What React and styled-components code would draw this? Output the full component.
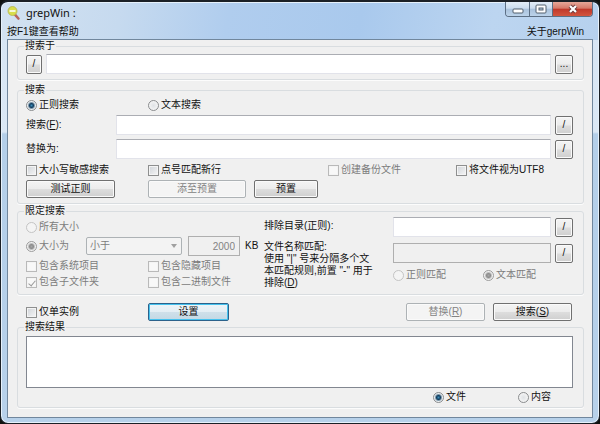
import React from 'react'
import styled, { createGlobalStyle, css } from 'styled-components'

const GlobalStyle = createGlobalStyle`
  * {
    box-sizing: border-box;
  }
  body {
    margin: 0;
    background: #10120f;
  }
  body, button, input, select, textarea {
    font-family: "Liberation Sans", "Noto Sans CJK SC", sans-serif;
    font-size: 10px;
    line-height: 12px;
    color: #111;
  }
`

const Window = styled.div`
  padding: 0 6px 5px;
  border: 1px solid #1b2026;
  border-top-width: 2px;
  border-radius: 8px;
  background:
    linear-gradient(100deg, #d3e2f1 0%, #c6daef 20%, #b0cdee 38%, #a9c9ed 60%, #bcd5f0 82%, #b6d1ee 100%) top / 100% 38px no-repeat,
    linear-gradient(#d5e4f3 0%, #dbe8f5 130px, #b4cfe9 132px, #b7d1ea 100%);
  box-shadow: inset 0 0 0 1px #e6f1fb;
`

const TitleBar = styled.header`
  display: flex;
  align-items: flex-start;
  height: 22px;
`

const Title = styled.h1`
  flex: 1;
  margin: 0;
  padding: 3px 0 0 6px;
  font-family: "Noto Sans", "Noto Sans CJK SC", sans-serif;
  font-size: 11px;
  font-weight: 400;
  line-height: 16px;
`

const AppIcon = styled.svg`
  width: 13px;
  height: 14px;
  margin-top: 4px;
`

const Captions = styled.div`
  display: flex;
  height: 15px;
  border: 1px solid #5c6f84;
  border-top: 0;
  border-radius: 0 0 4px 4px;
  overflow: hidden;
`

const Caption = styled.button`
  display: flex;
  align-items: center;
  justify-content: center;
  width: ${(p) => (p.$close ? '40px' : '23px')};
  padding: 0;
  border: 0;
  border-left: ${(p) => (p.$first ? '0' : '1px solid #5c6f84')};
  background: ${(p) =>
    p.$close
      ? 'linear-gradient(#e6a799 0%, #d67868 45%, #c0382a 50%, #d2553e 100%)'
      : 'linear-gradient(#e3edf7 0%, #cbdcee 45%, #a9c2dc 50%, #bcd3ea 100%)'};
`

const MenuBar = styled.nav`
  display: flex;
  justify-content: space-between;
  height: 15px;
  padding: 2px 9px 0 0;
`

const MenuLink = styled.a`
  color: #111;
  text-decoration: none;
`

const Client = styled.main`
  padding: 0 8px 9px 9px;
  border: 1px solid #71879d;
  background: #f0f0f0;
`

const Group = styled.fieldset`
  min-width: 0;
  margin: 0 0 ${(p) => p.$gap || 0}px;
  padding: 0 10px ${(p) => p.$bottom || 5}px 8px;
  border: 1px solid #d9dde0;
  border-radius: 3px;
  box-shadow: 0 1px 0 #fcfcfc;
`

const Legend = styled.legend`
  height: 12px;
  margin-left: -2px;
  padding: 0 1px;
`

const Field = styled.div`
  display: flex;
  align-items: center;
  gap: 4px;
  margin-top: ${(p) => p.$top || 0}px;
`

const FieldLabel = styled.label`
  width: 86px;
`

const TextBox = styled.input`
  flex: 1;
  min-width: 0;
  width: 100%;
  height: 20px;
  padding: 0 4px;
  border: 1px solid #e2e3ea;
  border-top-color: #abadb3;
  background: #fff;
  &:disabled {
    border-color: #afafaf;
    background: #f0f0f0;
    color: #838383;
  }
`

const Button = styled.button`
  height: 18px;
  width: ${(p) => p.$width}px;
  padding: 0;
  border: 1px solid #707070;
  border-radius: 2px;
  background: linear-gradient(#f4f4f4 0%, #ececec 48%, #dddddd 52%, #cfcfcf 100%);
  box-shadow: inset 0 0 0 1px #fafafa;
  text-align: center;
  ${(p) =>
    p.$focused &&
    css`
      border-color: #2c628b;
      background: linear-gradient(#eef4f8 0%, #e4eef4 48%, #cfe0ea 52%, #c3d8e4 100%);
      box-shadow: inset 0 0 0 1px #46c2ee;
    `}
  &:disabled {
    border-color: #adb2b5;
    background: #f4f4f4;
    color: #838383;
  }
`

const SmallButton = styled(Button)`
  width: ${(p) => p.$width || 18}px;
  height: 19px;
`

const Columns = styled.div`
  display: grid;
  grid-template-columns: 122px 180px 128px 1fr;
  align-items: center;
  min-height: ${(p) => p.$height || 16}px;
  margin-top: ${(p) => p.$top || 0}px;
`

const OptionLabel = styled.label`
  display: flex;
  align-items: center;
  gap: 2px;
  white-space: nowrap;
  color: ${(p) => (p.$off ? '#7c7c7c' : '#111')};
`

const CheckBox = styled.input.attrs({ type: 'checkbox' })`
  appearance: none;
  position: relative;
  width: 11px;
  height: 11px;
  margin: 0;
  border: 1px solid #8e8f8f;
  background: linear-gradient(135deg, #cfd3d8, #f6f6f6);
  box-shadow: inset 0 0 0 1px #f4f4f4;
  &:disabled {
    border-color: #b9b9b9;
    background: #f8f8f8;
  }
  &:checked::after {
    content: '';
    position: absolute;
    left: 3px;
    top: 1px;
    width: 3px;
    height: 6px;
    border: solid #9a9a9a;
    border-width: 0 1px 1px 0;
    transform: rotate(40deg);
  }
`

const Radio = styled.input.attrs({ type: 'radio' })`
  appearance: none;
  width: 11px;
  height: 11px;
  margin: 0;
  border: 1px solid #8a8c8e;
  border-radius: 50%;
  background: radial-gradient(circle, #dfe2e5 0%, #f6f6f6 80%);
  &:checked {
    background: radial-gradient(circle, #3f8db8 0, #123e60 2px, #e9eef1 4px);
  }
  &:disabled {
    border-color: #c4c4c4;
    background: #f4f4f4;
  }
  &:checked:disabled {
    border-color: #9c9c9c;
    background: radial-gradient(circle, #a5a5a5 0, #8d8d8d 2px, #f1f1f1 4px);
  }
`

const Limits = styled.div`
  display: grid;
  grid-template-columns: 238px 1fr;
`

const LimitColumn = styled.div`
  min-width: 0;
`

const SizeRow = styled.div`
  display: flex;
  align-items: center;
  height: 20px;
`

const SizeOption = styled.div`
  width: 60px;
`

const SelectWrap = styled.div`
  position: relative;
  width: 96px;
  margin-right: 6px;
  &::after {
    content: '';
    position: absolute;
    right: 5px;
    top: 7px;
    border: 3px solid transparent;
    border-top: 4px solid #a0a0a0;
    border-bottom: 0;
  }
`

const Select = styled.select`
  appearance: none;
  display: block;
  width: 100%;
  height: 18px;
  padding: 0 3px;
  border: 1px solid #adb2b5;
  border-radius: 2px;
  background: #f3f3f3;
  &:disabled {
    color: #7c7c7c;
    opacity: 1;
  }
`

const SizeBox = styled(TextBox)`
  flex: none;
  width: 52px;
  margin-right: 5px;
  text-align: right;
`

const Excludes = styled.div`
  display: grid;
  grid-template-columns: 129px 1fr;
  align-items: start;
`

const ExcludeLabel = styled.label`
  padding-top: ${(p) => p.$top || 0}px;
`

const Radios = styled.div`
  display: flex;
  justify-content: ${(p) => (p.$end ? 'flex-end' : 'flex-start')};
  gap: ${(p) => p.$gap}px;
  margin-top: ${(p) => p.$top}px;
  padding-right: ${(p) => (p.$end ? 22 : 0)}px;
`

const Actions = styled.div`
  display: grid;
  grid-template-columns: 114px 1fr auto auto;
  gap: 0 8px;
  padding: 0 12px 0 9px;
`

const Results = styled.textarea`
  display: block;
  width: 100%;
  height: 52px;
  margin-top: 3px;
  border: 1px solid #828790;
  background: #fff;
  resize: none;
`

const Check = ({ children, ...rest }) => (
  <OptionLabel $off={rest.disabled}>
    <CheckBox {...rest} />
    {children}
  </OptionLabel>
)

const Choice = ({ children, ...rest }) => (
  <OptionLabel $off={rest.disabled}>
    <Radio {...rest} />
    {children}
  </OptionLabel>
)

const App = () => {
  return (
    <>
      <GlobalStyle />
      <Window>
        <TitleBar>
          <AppIcon viewBox="0 0 13 14">
            <path d="M8 8.600l3.400 3.900" stroke="#b9655f" strokeWidth="2.600" strokeLinecap="round" />
            <circle cx="5.500" cy="5" r="4.500" fill="#d9dd4c" stroke="#b3b54e" strokeWidth="0.800" />
            <path d="M2.500 5h6" stroke="#fafbe6" strokeWidth="1.800" />
          </AppIcon>
          <Title>grepWin :</Title>
          <Captions>
            <Caption $first aria-label="最小化">
              <svg width="12" height="11" viewBox="0 0 12 11">
                <rect x="1" y="5" width="10" height="4" rx="1" fill="#fff" stroke="#53606e" />
              </svg>
            </Caption>
            <Caption aria-label="最大化">
              <svg width="12" height="10" viewBox="0 0 12 10">
                <rect x="1" y="1" width="10" height="8" rx="1" fill="#fff" stroke="#53606e" />
                <rect x="4" y="4" width="4" height="2" fill="#b9cde1" stroke="#53606e" />
              </svg>
            </Caption>
            <Caption $close aria-label="关闭">
              <svg width="12" height="10" viewBox="0 0 12 10">
                <path d="M3 2l6 6M9 2l-6 6" stroke="#6d3a3a" strokeWidth="4" />
                <path d="M3 2l6 6M9 2l-6 6" stroke="#fff" strokeWidth="2.200" />
              </svg>
            </Caption>
          </Captions>
        </TitleBar>
        <MenuBar>
          <MenuLink href="#help">按F1键查看帮助</MenuLink>
          <MenuLink href="#about">关于gerpWin</MenuLink>
        </MenuBar>

        <Client>
          <Group $gap={4}>
            <Legend>搜索于</Legend>
            <Field $top={2}>
              <SmallButton $width={16}>/</SmallButton>
              <TextBox aria-label="搜索于" />
              <SmallButton>...</SmallButton>
            </Field>
          </Group>

          <Group $bottom={5} $gap={1}>
            <Legend>搜索</Legend>
            <Columns $height={18}>
              <Choice name="mode" defaultChecked>正则搜索</Choice>
              <Choice name="mode">文本搜索</Choice>
            </Columns>
            <Field $top={1}>
              <FieldLabel htmlFor="find">搜索(<u>F</u>):</FieldLabel>
              <TextBox id="find" />
              <SmallButton>/</SmallButton>
            </Field>
            <Field $top={4}>
              <FieldLabel htmlFor="replace">替换为:</FieldLabel>
              <TextBox id="replace" />
              <SmallButton>/</SmallButton>
            </Field>
            <Columns $top={3}>
              <Check>大小写敏感搜索</Check>
              <Check>点号匹配新行</Check>
              <Check disabled>创建备份文件</Check>
              <Check>将文件视为UTF8</Check>
            </Columns>
            <Columns $height={18} $top={2}>
              <Button $width={89}>测试正则</Button>
              <Radios $gap={8} $top={0}>
                <Button $width={98} disabled>添至预置</Button>
                <Button $width={64}>预置</Button>
              </Radios>
            </Columns>
          </Group>

          <Group $bottom={4} $gap={8}>
            <Legend>限定搜索</Legend>
            <Limits>
              <LimitColumn>
                <Columns $height={18} $top={1}>
                  <Choice name="size" disabled>所有大小</Choice>
                </Columns>
                <SizeRow>
                  <SizeOption>
                    <Choice name="size" disabled defaultChecked>大小为</Choice>
                  </SizeOption>
                  <SelectWrap>
                    <Select disabled aria-label="大小为">
                      <option>小于</option>
                    </Select>
                  </SelectWrap>
                  <SizeBox id="kb" disabled defaultValue="2000" />
                  <label htmlFor="kb">KB</label>
                </SizeRow>
                <Columns $top={2}>
                  <Check disabled>包含系统项目</Check>
                  <Check disabled>包含隐藏项目</Check>
                </Columns>
                <Columns>
                  <Check disabled defaultChecked>包含子文件夹</Check>
                  <Check disabled>包含二进制文件</Check>
                </Columns>
              </LimitColumn>
              <LimitColumn>
                <Excludes>
                  <ExcludeLabel htmlFor="dirs" $top={3}>排除目录(正则):</ExcludeLabel>
                  <Field>
                    <TextBox id="dirs" />
                    <SmallButton>/</SmallButton>
                  </Field>
                </Excludes>
                <Excludes>
                  <ExcludeLabel htmlFor="names" $top={4}>
                    文件名称匹配:<br />使用 "|" 号来分隔多个文<br />本匹配规则,前置 "-" 用于<br />排除(<u>D</u>)
                  </ExcludeLabel>
                  <div>
                    <Field $top={6}>
                      <TextBox id="names" disabled />
                      <SmallButton>/</SmallButton>
                    </Field>
                    <Radios $gap={37} $top={6}>
                      <Choice name="names" disabled>正则匹配</Choice>
                      <Choice name="names" disabled defaultChecked>文本匹配</Choice>
                    </Radios>
                  </div>
                </Excludes>
              </LimitColumn>
            </Limits>
          </Group>

          <Actions>
            <Check>仅单实例</Check>
            <div>
              <Button $width={81} $focused>设置</Button>
            </div>
            <Button $width={79} disabled>替换(<u>R</u>)</Button>
            <Button $width={79}>搜索(<u>S</u>)</Button>
          </Actions>

          <Group $bottom={4}>
            <Legend>搜索结果</Legend>
            <Results aria-label="搜索结果" readOnly />
            <Radios $end $gap={52} $top={3}>
              <Choice name="view" defaultChecked>文件</Choice>
              <Choice name="view">内容</Choice>
            </Radios>
          </Group>
        </Client>
      </Window>
    </>
  )
}

export default App
